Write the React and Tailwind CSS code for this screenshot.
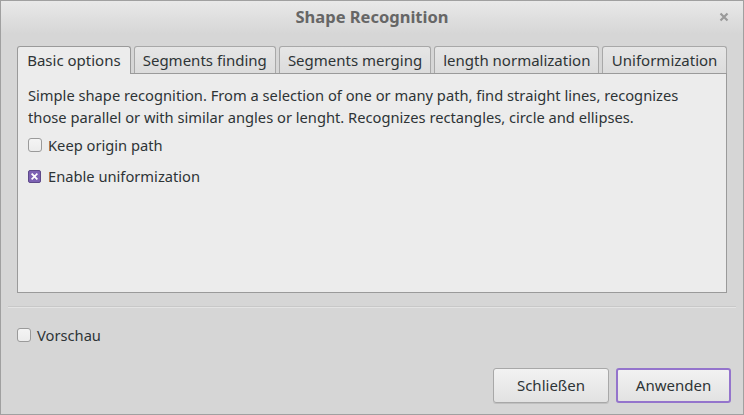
import React from "react";

function Check({ checked }) {
  if (checked) {
    return (
      <span className="flex h-[13px] w-[13px] shrink-0 items-center justify-center rounded-[2px] border border-[#5e4a8a] bg-[#7d62b3]">
        <svg width="7" height="7" viewBox="0 0 7 7">
          <path d="M1.2 1.2L5.8 5.8M5.8 1.2L1.2 5.8" stroke="#fff" strokeWidth="1.7" strokeLinecap="square" />
        </svg>
      </span>
    );
  }
  return (
    <span className="block h-[14px] w-[14px] shrink-0 rounded-[3px] border border-[#9a9a9a] bg-gradient-to-b from-[#f4f4f4] to-[#ececec]" />
  );
}

const tabs = [
  { label: "Basic options", w: "w-[114px]" },
  { label: "Segments finding", w: "w-[142px]" },
  { label: "Segments merging", w: "w-[153px]" },
  { label: "length normalization", w: "w-[165px]" },
  { label: "Uniformization", w: "w-[125px]" },
];

export default function App() {
  return (
    <div
      className="flex h-[415px] w-[744px] flex-col border border-[#a0a0a0] bg-[#d6d6d6] text-[#333]"
      style={{ fontFamily: '"Noto Sans", "Open Sans", sans-serif' }}
    >
      <div className="relative flex h-[33px] shrink-0 items-center justify-center bg-gradient-to-b from-[#e9e9e9] to-[#d6d6d6]">
        <span className="text-[16.5px] font-bold text-[#666]">Shape Recognition</span>
        <span className="absolute right-[14px] top-[11px]">
          <svg width="10" height="10" viewBox="0 0 10 10">
            <path d="M1.5 1.5L8.5 8.5M8.5 1.5L1.5 8.5" stroke="#9a9a9a" strokeWidth="2.2" />
          </svg>
        </span>
      </div>

      <div className="flex flex-col px-[16px] pt-[12px]">
        <div className="flex items-end gap-[3px]">
          {tabs.map((t, i) => (
            <div
              key={t.label}
              className={
                i === 0
                  ? `${t.w} relative z-10 -mb-px flex h-[28px] items-center justify-center rounded-t-[3px] border border-b-0 border-[#9a9a9a] bg-[#ececec] text-[15px] text-[#2e3436]`
                  : `${t.w} flex h-[27px] items-center justify-center rounded-t-[3px] border border-b-0 border-[#a8a8a8] bg-gradient-to-b from-[#e6e6e6] to-[#dcdcdc] text-[15px] text-[#2e3436]`
              }
            >
              {t.label}
            </div>
          ))}
        </div>
        <div className="flex h-[220px] flex-col border border-[#9a9a9a] bg-[#ececec] px-[10px] pt-[10px] text-[14.7px] text-[#2e3436]">
          <p className="leading-[22px]">
            Simple shape recognition. From a selection of one or many path, find straight lines, recognizes those parallel or with similar angles or lenght. Recognizes rectangles, circle and ellipses.
          </p>
          <label className="mt-[7px] flex items-center gap-[6px] leading-[20px]">
            <Check />
            <span>Keep origin path</span>
          </label>
          <label className="mt-[11px] flex items-center gap-[7px] leading-[20px]">
            <Check checked />
            <span>Enable uniformization</span>
          </label>
        </div>
      </div>

      <div className="mx-[7px] mt-[13px] h-[2px] border-t border-[#c8c8c8] bg-[#e4e4e4]" />

      <label className="ml-[16px] mt-[17px] flex items-center gap-[6px] text-[14.7px] leading-[20px] text-[#2e3436]">
        <Check />
        <span>Vorschau</span>
      </label>

      <div className="mr-[12px] mt-[23px] flex justify-end gap-[7px]">
        <button className="h-[35px] w-[116px] rounded-[3px] border border-[#a8a8a8] bg-gradient-to-b from-[#f2f2f2] to-[#e2e2e2] text-[15px] text-[#2e3436] shadow-[0_1px_0_#c0c0c0]">
          Schließen
        </button>
        <button className="h-[35px] w-[115px] rounded-[3px] border-2 border-[#9474cc] bg-gradient-to-b from-[#f2f2f2] to-[#e2e2e2] text-[15px] text-[#2e3436]">
          Anwenden
        </button>
      </div>
    </div>
  );
}
